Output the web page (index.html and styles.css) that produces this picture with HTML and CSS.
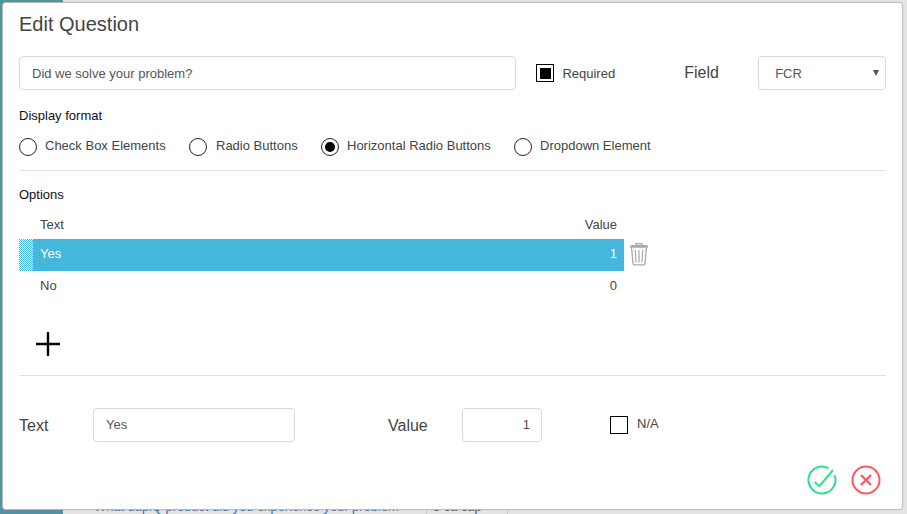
FILE: index.html
```html
<!DOCTYPE html>
<html lang="en">
<head>
<meta charset="utf-8">
<title>Edit Question</title>
<link rel="stylesheet" href="styles.css">
</head>
<body>
<div class="backdrop">
  <div class="side"></div>
  <div class="page"><span class="under-q">What dapiQ product did you experience your problem</span><span class="under-a">5 ca cap</span></div>
</div>
<div class="modal">
  <h1 class="title">Edit Question</h1>
  <div class="top-row">
    <div class="input question">Did we solve your problem?</div>
    <div class="check required-check"><span class="box"><span class="box-fill"></span></span><span class="check-label">Required</span></div>
    <span class="big-label field-label">Field</span>
    <div class="input select">FCR<span class="caret"></span></div>
  </div>
  <div class="section-label format-label">Display format</div>
  <div class="radios">
    <div class="radio r1"><span class="circle"></span>Check Box Elements</div>
    <div class="radio r2"><span class="circle"></span>Radio Buttons</div>
    <div class="radio r3"><span class="circle on"></span>Horizontal Radio Buttons</div>
    <div class="radio"><span class="circle"></span>Dropdown Element</div>
  </div>
  <hr class="rule rule-a">
  <div class="section-label options-label">Options</div>
  <div class="table">
    <div class="row head"><span>Text</span><span>Value</span></div>
    <div class="row-wrap">
      <svg class="handle" width="14" height="32" aria-hidden="true" shape-rendering="crispEdges">
        <defs>
          <pattern id="checker" width="2" height="2" patternUnits="userSpaceOnUse">
            <rect width="2" height="2" fill="#fff"/>
            <rect width="1" height="1" fill="#45b6dc"/>
            <rect x="1" y="1" width="1" height="1" fill="#45b6dc"/>
          </pattern>
        </defs>
        <rect width="14" height="32" fill="url(#checker)"/>
      </svg>
      <div class="row selected"><span>Yes</span><span>1</span></div>
      <svg class="trash" viewBox="0 0 20 24" width="20" height="24" aria-hidden="true">
        <path d="M7 3V1.600h6V3" fill="none" stroke="#a9a9a9" stroke-width="1.200"/>
        <path d="M1 5c0-1.300 1-2 2-2h14c1 0 2 .7 2 2v.8H1z" fill="#a9a9a9"/>
        <path d="M2.600 6l1.400 15.500c.1.800.6 1.300 1.400 1.300h9.200c.8 0 1.300-.5 1.400-1.300L17.400 6" fill="none" stroke="#a9a9a9" stroke-width="1.300"/>
        <path d="M6.300 8l.7 12.500M10 8v12.500M13.700 8L13 20.500" fill="none" stroke="#a9a9a9" stroke-width="1.200"/>
      </svg>
    </div>
    <div class="row plain"><span>No</span><span>0</span></div>
  </div>
  <svg class="plus" viewBox="0 0 24 24" width="24" height="24" aria-hidden="true"><path d="M12 0v24M0 12h24" stroke="#000" stroke-width="2.400" fill="none"/></svg>
  <hr class="rule rule-b">
  <div class="edit-row">
    <span class="big-label text-label">Text</span>
    <div class="input text-input">Yes</div>
    <span class="big-label value-label">Value</span>
    <div class="input value-input">1</div>
    <div class="check na-check"><span class="box"></span><span class="check-label">N/A</span></div>
  </div>
  <div class="actions">
    <svg viewBox="0 0 30 30" width="30" height="30" aria-hidden="true">
      <path d="M27.500 10A13.500 13.500 0 1 1 21.500 3.200" fill="none" stroke="#2fe08a" stroke-width="2"/>
      <path d="M7.500 17l5 4L26 5" fill="none" stroke="#2fe08a" stroke-width="2"/>
    </svg>
    <svg viewBox="0 0 30 30" width="30" height="30" aria-hidden="true">
      <circle cx="15" cy="15" r="13.500" fill="none" stroke="#fb5a5f" stroke-width="2"/>
      <path d="M10 10l10 10M20 10L10 20" fill="none" stroke="#fb5a5f" stroke-width="2.400"/>
    </svg>
  </div>
</div>
</body>
</html>
```
FILE: styles.css
```css
* { box-sizing: border-box; }
html, body { margin: 0; padding: 0; height: 514px; overflow: hidden; }
body { font-family: "Liberation Sans", Arial, sans-serif; font-size: 13px; color: #444; background: #e3e3e3; position: relative; }
.backdrop { display: flex; height: 514px; }
.side { width: 63px; background: #55909f; }
.page { flex: 1; background: #e3e3e3; position: relative; font-size: 12.860px; color: #3b6ea8; line-height: 15px; }
.under-q { position: absolute; left: 31px; top: 499px; }
.under-a { position: absolute; left: 363px; top: 499px; width: 82px; height: 15px; padding-left: 6px; color: #555; border-left: 1px solid #c9c9c9; border-right: 1px solid #c9c9c9; }
.modal { position: absolute; left: 3px; top: 3px; width: 899px; height: 506px; background: #fff; border-radius: 3px; box-shadow: 0 0 1px 1px #bbb; padding: 0 16px; }
.title { margin: 0; padding-top: 9px; font-size: 20px; line-height: 24px; font-weight: 400; color: #444; }
.top-row { display: flex; align-items: center; margin-top: 20px; height: 34px; }
.input { height: 34px; border: 1px solid #d9d9d9; border-radius: 4px; background: #fff; display: flex; align-items: center; color: #555; font-size: 13px; }
.question { width: 498px; padding-left: 12px; }
.check { display: flex; align-items: center; }
.box { width: 18px; height: 18px; border: 1.500px solid #000; display: flex; align-items: center; justify-content: center; background: #fff; }
.box-fill { width: 11px; height: 11px; background: #000; }
.check-label { margin-left: 8px; }
.required-check { margin-left: 20px; width: 148px; }
.big-label { font-size: 16px; color: #444; }
.field-label { width: 74px; }
.select { width: 128px; padding-left: 16px; position: relative; }
.caret { position: absolute; right: 6px; top: 13px; border-left: 3px solid transparent; border-right: 3px solid transparent; border-top: 6px solid #555; }
.section-label { color: #111; }
.format-label { margin-top: 19px; line-height: 14px; }
.radios { display: flex; align-items: center; margin-top: 15px; height: 18px; color: #444; }
.radio { display: flex; align-items: flex-start; height: 18px; line-height: 16px; }
.r1 { width: 170px; }
.r2 { width: 132px; }
.r2 .circle { margin-right: 9px; }
.r3 { width: 193px; }
.circle { width: 18px; height: 18px; border: 1.500px solid #222; border-radius: 50%; margin-right: 8px; display: flex; align-items: center; justify-content: center; background: #fff; }
.circle.on::after { content: ""; width: 10px; height: 10px; border-radius: 50%; background: #000; }
.rule { margin: 0; border: 0; border-top: 1px solid #e2e2e2; }
.rule-a { margin-top: 14px; }
.options-label { margin-top: 17px; line-height: 14px; }
.table { margin-top: 9px; width: 640px; }
.row { display: flex; justify-content: space-between; align-items: center; padding: 0 7px; color: #444; }
.head, .plain { margin-left: 14px; width: 591px; padding-bottom: 2px; }
.head { height: 28px; }
.plain { height: 30px; }
.row-wrap { display: flex; align-items: center; height: 32px; position: relative; }
.handle { display: block; flex: none; }
.selected { width: 591px; height: 32px; padding-bottom: 4px; background: #45b6dc; color: #fff; font-weight: 400; }
.trash { margin: 0 0 2px 5px; }
.plus { display: block; margin: 31px 0 0 17px; }
.rule-b { margin-top: 19px; }
.edit-row { display: flex; align-items: center; height: 34px; margin-top: 32px; }
.text-label { width: 74px; padding-top: 2px; }
.text-input { width: 202px; padding: 0 0 2px 12px; }
.value-label { margin-left: 93px; width: 74px; padding-top: 2px; }
.value-input { width: 80px; justify-content: flex-end; padding: 0 11px 2px 0; color: #5c4a50; }
.na-check { margin-left: 68px; margin-top: -1px; }
.na-check .check-label { margin: 0 0 2px 9px; }
.actions { position: absolute; right: 21px; bottom: 14px; display: flex; gap: 14px; }
```
